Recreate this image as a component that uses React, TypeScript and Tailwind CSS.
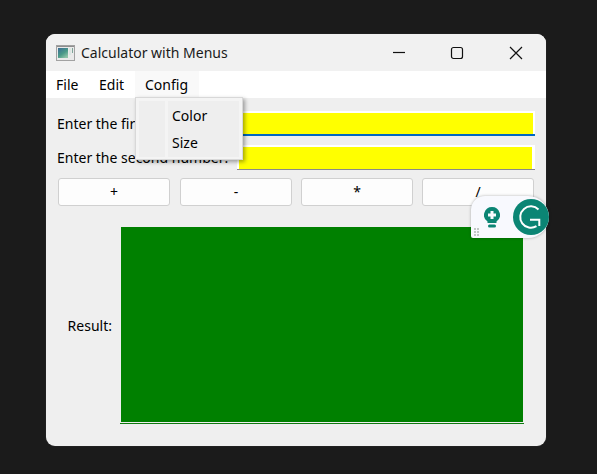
import React from "react";

const font = "font-['Noto_Sans','Open_Sans',sans-serif]";

const AppIcon = () => (
  <svg width="19" height="16" viewBox="0 0 19 16" className="shrink-0">
    <defs>
      <linearGradient id="appIconFill" x1="0" y1="0" x2="0.7" y2="1">
        <stop offset="0" stopColor="#3c6c96" />
        <stop offset="0.6" stopColor="#4a9a88" />
        <stop offset="1" stopColor="#8fc4a8" />
      </linearGradient>
    </defs>
    <rect x="0.5" y="0.5" width="18" height="15" fill="#eaeaea" stroke="#a2a2a2" />
    <rect x="1" y="1" width="17" height="1" fill="#8e8e8e" />
    <rect x="2" y="3" width="10" height="10" fill="url(#appIconFill)" />
    <rect x="13" y="3" width="2" height="7" fill="#dbe7e2" />
    <rect x="16" y="3" width="1" height="5" fill="#7fa59a" />
  </svg>
);

const WindowButtons = () => (
  <div className="flex items-center ml-auto h-full">
    <svg width="14" height="14" viewBox="0 0 14 14" className="mr-[44px]">
      <path d="M1 6.500H13" stroke="#111" strokeWidth="1.200" />
    </svg>
    <svg width="14" height="14" viewBox="0 0 14 14" className="mr-[45px]">
      <rect x="1.500" y="1.500" width="11" height="11" rx="2" fill="none" stroke="#111" strokeWidth="1.200" />
    </svg>
    <svg width="14" height="14" viewBox="0 0 14 14" className="mr-[23px]">
      <path d="M1 1L13 13M13 1L1 13" stroke="#111" strokeWidth="1.200" />
    </svg>
  </div>
);

const OpButton = ({ label, className }: { label: string; className?: string }) => (
  <button
    className={
      "w-[112px] h-[28px] bg-[#fdfdfd] border border-[#d0d0d0] rounded-[3px] text-[14px] leading-none text-black " +
      (className || "")
    }
  >
    {label}
  </button>
);

const NumberRow = ({ label, active }: { label: string; active?: boolean }) => (
  <div className="flex items-center h-[25px]">
    <span className="w-[180px] text-[14px] leading-none text-black whitespace-nowrap">{label}</span>
    <div
      className={
        "flex-1 h-full pt-[2px] bg-white " +
        (active ? "border-b-2 border-[#0067c0] pl-px pr-[2px]" : "border-b border-[#8a8a8a] pl-[2px] pr-[3px]")
      }
    >
      <div className="h-full bg-[#ffff00]" />
    </div>
  </div>
);

const ConfigMenu = () => (
  <div className="absolute left-[89px] top-[63px] w-[108px] h-[63px] bg-[#f4f4f4] border border-[#d8d8d8] shadow-[2px_2px_4px_rgba(0,0,0,0.35)] pl-[3px] pr-[3px] pt-[3px] pb-[2px] flex gap-[3px]">
    <div className="w-[26px] bg-[#eeeeee]" />
    <div className="flex-1 bg-[#eeeeee] pt-px text-[14px] text-black">
      <div className="h-[27px] pl-[4px] flex items-center">Color</div>
      <div className="h-[27px] pl-[4px] flex items-center">Size</div>
    </div>
  </div>
);

const GrammarlyWidget = () => (
  <div className="absolute left-[425px] top-[162px] w-[78px] h-[42px] flex items-center bg-[#f8f9fe] rounded-tl-[14px] rounded-bl-[2px] rounded-r-[21px] shadow-[0_0_3px_rgba(0,0,0,0.3)]">
    <svg width="16" height="21" viewBox="0 0 16 21" className="ml-[13px]">
      <path d="M8 0a8 8 0 0 0-4.500 14.600V16h9v-1.400A8 8 0 0 0 8 0z" fill="#0b8574" />
      <path d="M6.500 4h3v2.500H12v3H9.500V12h-3V9.500H4v-3h2.500z" fill="#f8f9fe" />
      <rect x="4" y="17.500" width="8" height="3" rx="1.500" fill="#0b8574" />
    </svg>
    <svg width="36" height="36" viewBox="0 0 36 36" className="ml-[13px]">
      <circle cx="18" cy="18" r="18" fill="#0b8574" />
      <path d="M25.500 10.500A10.700 10.700 0 1 0 23.500 27.200" fill="none" stroke="#ffffff" strokeWidth="2" />
      <path d="M17 20.700H26.300V27" fill="none" stroke="#ffffff" strokeWidth="2" />
    </svg>
    <div className="absolute left-[3px] bottom-[2px] grid grid-cols-2 gap-px">
      {[0, 1, 2, 3, 4, 5].map((i) => (
        <div key={i} className="w-[2px] h-[2px] bg-[#c2c8c6]" />
      ))}
    </div>
  </div>
);

const App: React.FC = () => {
  return (
    <div className={"w-[597px] h-[474px] bg-[#1b1b1b] pl-[46px] pt-[34px] overflow-hidden " + font}>
      <div className="relative w-[500px] h-[412px] bg-[#efefef] rounded-[9px] shadow-[0_0_1px_#555]">
        <div className="h-[37px] bg-[#f1f1f1] rounded-t-[9px] flex items-center pl-[10px]">
          <AppIcon />
          <span className="ml-[6px] text-[14px] leading-none text-[#1a1a1a]">Calculator with Menus</span>
          <WindowButtons />
        </div>

        <div className="h-[27px] bg-white flex items-stretch text-[14px] text-black">
          <div className="w-[43px] pl-[10px] flex items-center">File</div>
          <div className="w-[46px] pl-[10px] flex items-center">Edit</div>
          <div className="w-[64px] pl-[10px] bg-[#f9f9f9] flex items-center">Config</div>
        </div>

        <div className="pl-[11px] pr-[11px] pt-[13px]">
          <div className="flex flex-col gap-[9px]">
            <NumberRow label="Enter the first number:" active />
            <NumberRow label="Enter the second number:" />
          </div>

          <div className="flex mt-[8px] pl-px">
            <OpButton label="+" />
            <OpButton label="-" className="ml-[10px]" />
            <OpButton label="*" className="ml-[9px]" />
            <OpButton label="/" className="ml-[9px]" />
          </div>

          <div className="flex mt-[21px] pr-[12px]">
            <div className="w-[55px] flex items-center justify-end text-[14px] text-black">Result:</div>
            <div className="ml-[9px] flex-1">
              <div className="h-[195px] bg-[#008000]" />
              <div className="h-px mt-px -mx-px bg-[#0f7a0f]" />
            </div>
          </div>
        </div>

        <ConfigMenu />
        <GrammarlyWidget />
      </div>
    </div>
  );
};

export default App;
